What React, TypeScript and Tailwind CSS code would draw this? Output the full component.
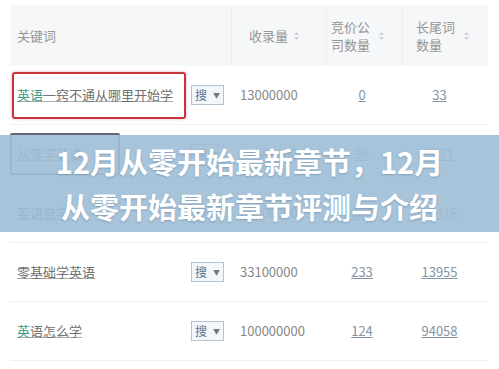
const font = { fontFamily: '"Noto Sans CJK SC", "Noto Sans", sans-serif' };

function SortIcon() {
  return (
    <svg width="7" height="10" viewBox="0 0 7 10" className="ml-[5px] shrink-0">
      <path d="M3.5 1 L6 4 L1 4 Z" fill="#cdd1d5" />
      <path d="M3.5 9 L6 6 L1 6 Z" fill="#cdd1d5" />
    </svg>
  );
}

function Select() {
  return (
    <div className="flex h-[20px] w-[33px] items-center justify-between border border-[#b5c3d1] bg-[#f3f7fb] px-[3px] text-[12px] text-[#5a7494]">
      <span>搜</span>
      <span className="text-[7px] text-[#777]">▼</span>
    </div>
  );
}

type Row = { kw: string; hl?: number; n: string; c: string; l: string };

const rows: Row[] = [
  { kw: "英语一窍不通从哪里开始学", hl: 2, n: "13000000", c: "0", l: "33" },
  { kw: "从零学英语", n: "24500000", c: "98", l: "2871" },
  { kw: "英语自学", n: "56200000", c: "312", l: "20416" },
  { kw: "零基础学英语", n: "33100000", c: "233", l: "13955" },
  { kw: "英语怎么学", hl: 1, n: "100000000", c: "124", l: "94058" },
];

export default function App() {
  return (
    <div className="relative h-[369px] w-[499px] overflow-hidden bg-white" style={font}>
      <div className="ml-[10px] mt-[5px] w-[478px]">
        {/* header */}
        <div className="grid h-[61px] grid-cols-[222px_95px_76px_85px] bg-[#f6f7f9] text-[13px] leading-[18px] text-[#959595]">
          <div className="flex items-center border-r border-[#eceef0] pl-[7px] pt-[1px]">关键词</div>
          <div className="flex items-center border-r border-[#eceef0] pl-[17px]">
            收录量
            <SortIcon />
          </div>
          <div className="flex items-center border-r border-[#eceef0] pl-[4px]">
            <span className="w-[42px]">竞价公司数量</span>
            <SortIcon />
          </div>
          <div className="flex items-center pl-[13px]">
            <span className="w-[42px]">长尾词数量</span>
            <SortIcon />
          </div>
        </div>

        {/* rows */}
        {rows.map((r, i) => (
          <div
            key={i}
            className="grid h-[59px] grid-cols-[176px_46px_95px_76px_85px] items-center border-b border-[#eef0f2] text-[13px] text-[#707070]"
          >
            <div className="relative flex h-full items-center pl-[7px]">
              {i === 0 && (
                <div className="absolute left-[2px] top-[6px] h-[47px] w-[174px] rounded-[3px] border-2 border-[#c8333a] shadow-[0_0_3px_rgba(200,50,60,0.4)]" />
              )}
              {i === 1 && (
                <div className="absolute left-0 top-[8px] h-[42px] w-[110px] rounded-[2px] border-2 border-[#6e6478]" />
              )}
              <span className="underline decoration-[#aaa]">
                <span className="text-[#3c9a86]">{r.kw.slice(0, r.hl ?? 0)}</span>
                {r.kw.slice(r.hl ?? 0)}
              </span>
            </div>
            <div className="flex items-center pl-[5px]">
              <Select />
            </div>
            <div className="pl-[8px] text-[#888]">{r.n}</div>
            <div className="pr-[6px] text-center text-[#8494a4] underline">{r.c}</div>
            <div className="pr-[12px] text-center text-[#8494a4] underline">{r.l}</div>
          </div>
        ))}
      </div>

      {/* title banner */}
      <div className="absolute left-0 top-[135px] flex h-[97px] w-full flex-col items-center justify-center bg-[rgba(158,190,214,0.9)]">
        <div className="text-[29px] font-bold leading-[45px] text-white [text-shadow:0_1px_2px_rgba(60,90,120,0.35)]">
          12月从零开始最新章节，12月
        </div>
        <div className="text-[29px] font-bold leading-[45px] text-white [text-shadow:0_1px_2px_rgba(60,90,120,0.35)]">
          从零开始最新章节评测与介绍
        </div>
      </div>
    </div>
  );
}
